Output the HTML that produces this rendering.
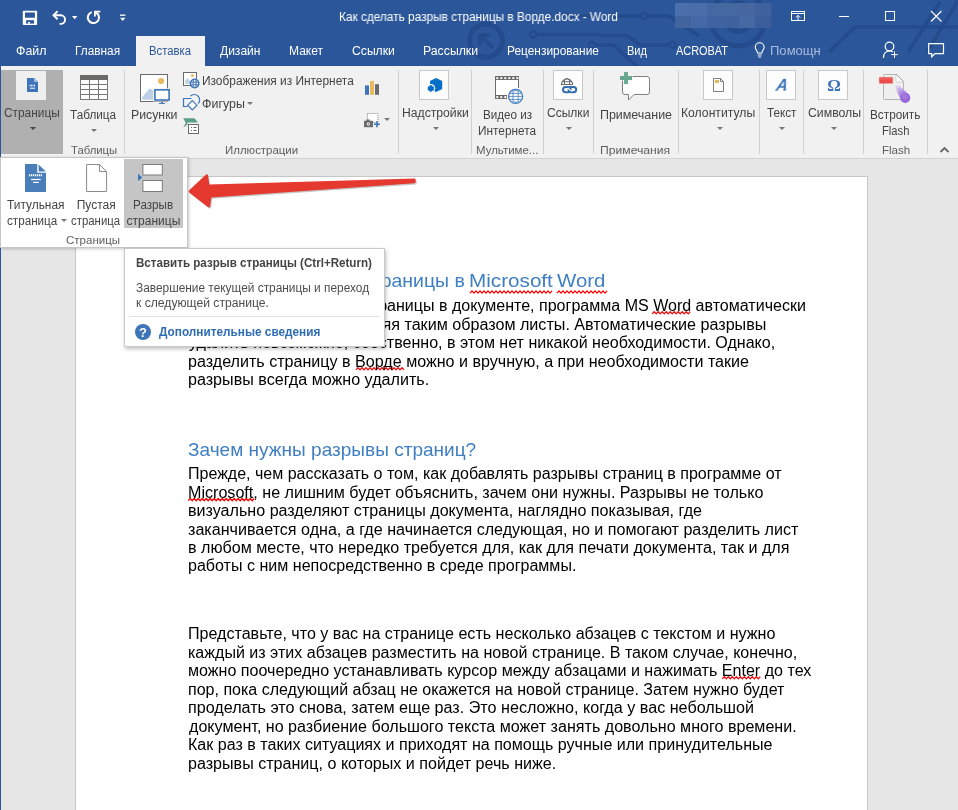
<!DOCTYPE html>
<html lang="ru">
<head>
<meta charset="utf-8">
<title>Как сделать разрыв страницы в Ворде.docx - Word</title>
<style>
*{box-sizing:border-box;margin:0;padding:0}
html,body{width:958px;height:810px;overflow:hidden;background:#e6e6e6}
body{font-family:"Liberation Sans",sans-serif;font-size:12px;color:#444}
#app{position:relative;width:958px;height:810px;overflow:hidden;background:#e6e6e6}
.abs{position:absolute}
/* title */
#title{position:absolute;left:0;top:0;width:958px;height:66px;background:#2b579a;overflow:hidden}
#tabsel{position:absolute;left:136px;top:36px;width:69px;height:30px;background:#f1f1f1}
/* ribbon */
#ribbon{position:absolute;left:0;top:66px;width:958px;height:93px;background:#f1f1f1;border-bottom:1px solid #d2d2d2}
.sep{position:absolute;top:4px;width:1px;height:84px;background:#d0d0d0}
.dd{position:absolute;width:0;height:0;border-left:3px solid transparent;border-right:3px solid transparent;border-top:3px solid #777}
.ibox{position:absolute;width:30px;height:30px;background:#fdfdfd;border:1px solid #c8c8c8}
/* doc */
#doc{position:absolute;left:0;top:158px;width:958px;height:652px;background:#e6e6e6}
#page{position:absolute;left:75px;top:18px;width:793px;height:700px;background:#fff;border:1px solid #c6c6c6}
/* dropdown */
#dropdown{position:absolute;left:0px;top:157px;width:188px;height:91px;background:#fff;border:1px solid #c6c6c6;box-shadow:1px 1px 3px rgba(0,0,0,.22)}
#tooltip{position:absolute;left:124px;top:248px;width:261px;height:99px;background:#fff;border:1px solid #c8c8c8;box-shadow:1px 2px 4px rgba(0,0,0,.25)}
.tx{position:absolute;white-space:nowrap;line-height:20px;transform-origin:0 0}
</style>
</head>
<body>
<div id="app">

<!-- DOCUMENT -->
<div id="doc">
 <div id="page"></div>
</div>
<div id="doctext" style="will-change:transform">
 <svg class="abs" style="left:0;top:0" width="958" height="810" viewBox="0 0 958 810"><g fill="none" stroke="#f00" stroke-width="1.25">
  <path d="M470.0 293.1 L472.0 290.9 L474.0 293.1 L476.0 290.9 L478.0 293.1 L480.0 290.9 L482.0 293.1 L484.0 290.9 L486.0 293.1 L488.0 290.9 L490.0 293.1 L492.0 290.9 L494.0 293.1 L496.0 290.9 L498.0 293.1 L500.0 290.9 L502.0 293.1 L504.0 290.9 L506.0 293.1 L508.0 290.9 L510.0 293.1 L512.0 290.9 L514.0 293.1 L516.0 290.9 L518.0 293.1 L520.0 290.9 L522.0 293.1 L524.0 290.9 L526.0 293.1 L528.0 290.9 L530.0 293.1 L532.0 290.9 L534.0 293.1 L536.0 290.9 L538.0 293.1 L540.0 290.9 L542.0 293.1 L544.0 290.9 L546.0 293.1 L548.0 290.9 L550.0 293.1 L552.0 290.9"/>
  <path d="M557.0 293.1 L559.0 290.9 L561.0 293.1 L563.0 290.9 L565.0 293.1 L567.0 290.9 L569.0 293.1 L571.0 290.9 L573.0 293.1 L575.0 290.9 L577.0 293.1 L579.0 290.9 L581.0 293.1 L583.0 290.9 L585.0 293.1 L587.0 290.9 L589.0 293.1 L591.0 290.9 L593.0 293.1 L595.0 290.9 L597.0 293.1 L599.0 290.9 L601.0 293.1 L603.0 290.9 L605.0 293.1 L607.0 290.9"/>
  <path d="M652.2 313.8 L654.2 311.6 L656.2 313.8 L658.2 311.6 L660.2 313.8 L662.2 311.6 L664.2 313.8 L666.2 311.6 L668.2 313.8 L670.2 311.6 L672.2 313.8 L674.2 311.6 L676.2 313.8 L678.2 311.6 L680.2 313.8 L682.2 311.6 L684.2 313.8 L686.2 311.6 L688.2 313.8 L690.2 311.6"/>
  <path d="M356.0 369.8 L358.0 367.6 L360.0 369.8 L362.0 367.6 L364.0 369.8 L366.0 367.6 L368.0 369.8 L370.0 367.6 L372.0 369.8 L374.0 367.6 L376.0 369.8 L378.0 367.6 L380.0 369.8 L382.0 367.6 L384.0 369.8 L386.0 367.6 L388.0 369.8 L390.0 367.6 L392.0 369.8 L394.0 367.6 L396.0 369.8 L398.0 367.6 L400.0 369.8 L402.0 367.6 L404.0 369.8"/>
  <path d="M188.2 500.7 L190.2 498.5 L192.2 500.7 L194.2 498.5 L196.2 500.7 L198.2 498.5 L200.2 500.7 L202.2 498.5 L204.2 500.7 L206.2 498.5 L208.2 500.7 L210.2 498.5 L212.2 500.7 L214.2 498.5 L216.2 500.7 L218.2 498.5 L220.2 500.7 L222.2 498.5 L224.2 500.7 L226.2 498.5 L228.2 500.7 L230.2 498.5 L232.2 500.7 L234.2 498.5 L236.2 500.7 L238.2 498.5 L240.2 500.7 L242.2 498.5 L244.2 500.7 L246.2 498.5 L248.2 500.7 L250.2 498.5 L252.2 500.7 L254.2 498.5"/>
  <path d="M722.3 678.8 L724.3 676.6 L726.3 678.8 L728.3 676.6 L730.3 678.8 L732.3 676.6 L734.3 678.8 L736.3 676.6 L738.3 678.8 L740.3 676.6 L742.3 678.8 L744.3 676.6 L746.3 678.8 L748.3 676.6 L750.3 678.8 L752.3 676.6 L754.3 678.8 L756.3 676.6 L758.3 678.8 L760.3 676.6"/>
 </g></svg>
 <div class="tx" style="left:188.01px;top:271.00px;font-size:18.5px;color:#3f7fc1;transform:scaleX(0.9941);">Как сделать разрыв</div>
 <div class="tx" style="left:361.95px;top:271.00px;font-size:18.5px;color:#3f7fc1;transform:scaleX(1.0521);">страницы в</div>
 <div class="tx" style="left:469.08px;top:271.00px;font-size:18.5px;color:#3f7fc1;transform:scaleX(1.1176);">Microsoft</div>
 <div class="tx" style="left:557.40px;top:271.00px;font-size:18.5px;color:#3f7fc1;transform:scaleX(1.1023);">Word</div>
 <div class="tx" style="left:188.00px;top:296.00px;font-size:16px;color:#000;transform:scaleX(1.0020);">При достижении конца страницы в документе, программа MS Word автоматически</div>
 <div class="tx" style="left:187.99px;top:315.00px;font-size:16px;color:#000;transform:scaleX(1.0077);">вставляет разрыв, разделяя таким образом листы. Автоматические разрывы</div>
 <div class="tx" style="left:189.00px;top:333.00px;font-size:16px;color:#000;transform:scaleX(1.0026);">удалить невозможно, собственно, в этом нет никакой необходимости. Однако,</div>
 <div class="tx" style="left:187.99px;top:352.00px;font-size:16px;color:#000;transform:scaleX(1.0056);">разделить страницу в Ворде можно и вручную, а при необходимости такие</div>
 <div class="tx" style="left:187.99px;top:370.00px;font-size:16px;color:#000;transform:scaleX(1.0068);">разрывы всегда можно удалить.</div>
 <div class="tx" style="left:187.97px;top:440.00px;font-size:18.5px;color:#3f7fc1;transform:scaleX(1.0294);">Зачем нужны разрывы страниц?</div>
 <div class="tx" style="left:188.00px;top:464.00px;font-size:16px;color:#000;transform:scaleX(1.0007);">Прежде, чем рассказать о том, как добавлять разрывы страниц в программе от</div>
 <div class="tx" style="left:187.99px;top:483.00px;font-size:16px;color:#000;transform:scaleX(1.0061);">Microsoft, не лишним будет объяснить, зачем они нужны. Разрывы не только</div>
 <div class="tx" style="left:187.99px;top:501.00px;font-size:16px;color:#000;transform:scaleX(1.0057);">визуально разделяют страницы документа, наглядно показывая, где</div>
 <div class="tx" style="left:187.99px;top:520.00px;font-size:16px;color:#000;transform:scaleX(1.0054);">заканчивается одна, а где начинается следующая, но и помогают разделить лист</div>
 <div class="tx" style="left:187.99px;top:538.00px;font-size:16px;color:#000;transform:scaleX(1.0055);">в любом месте, что нередко требуется для, как для печати документа, так и для</div>
 <div class="tx" style="left:188.00px;top:556.00px;font-size:16px;color:#000;transform:scaleX(1.0031);">работы с ним непосредственно в среде программы.</div>
 <div class="tx" style="left:188.00px;top:624.00px;font-size:16px;color:#000;transform:scaleX(1.0046);">Представьте, что у вас на странице есть несколько абзацев с текстом и нужно</div>
 <div class="tx" style="left:188.00px;top:643.00px;font-size:16px;color:#000;transform:scaleX(1.0028);">каждый из этих абзацев разместить на новой странице. В таком случае, конечно,</div>
 <div class="tx" style="left:188.00px;top:661.00px;font-size:16px;color:#000;transform:scaleX(1.0048);">можно поочередно устанавливать курсор между абзацами и нажимать Enter до тех</div>
 <div class="tx" style="left:188.00px;top:680.00px;font-size:16px;color:#000;transform:scaleX(1.0013);">пор, пока следующий абзац не окажется на новой странице. Затем нужно будет</div>
 <div class="tx" style="left:187.99px;top:698.00px;font-size:16px;color:#000;transform:scaleX(1.0084);">проделать это снова, затем еще раз. Это несложно, когда у вас небольшой</div>
 <div class="tx" style="left:189.00px;top:717.00px;font-size:16px;color:#000;transform:scaleX(1.0053);">документ, но разбиение большого текста может занять довольно много времени.</div>
 <div class="tx" style="left:188.00px;top:735.00px;font-size:16px;color:#000;transform:scaleX(1.0038);">Как раз в таких ситуациях и приходят на помощь ручные или принудительные</div>
 <div class="tx" style="left:187.99px;top:754.00px;font-size:16px;color:#000;transform:scaleX(1.0052);">разрывы страниц, о которых и пойдет речь ниже.</div>

</div>

<!-- TITLE BAR -->
<div id="title">

 <svg class="abs" style="left:0;top:0" width="958" height="66" viewBox="0 0 958 66">
  <!-- circuit pattern -->
  <g fill="none" stroke="#23498a" stroke-width="3.500" opacity=".85">
   <circle cx="486" cy="40.700" r="16.500" stroke-width="5"/>
   <path d="M493 48 L481 36 M490 35 H480 V45" stroke-width="3.500"/>
   <circle cx="533" cy="34.500" r="3.200" stroke-width="2.200"/>
   <path d="M537 34.500 H600 M600 35.500 H627 L640 45 H669"/>
   <circle cx="672.600" cy="45" r="3.300" stroke-width="2.200"/>
   <circle cx="592" cy="45" r="3.200" stroke-width="2.200"/>
   <path d="M596 45 H613 L638 67"/>
   <path d="M560 16 H640 M648 16 H669 L699 36"/>
   <circle cx="644" cy="16" r="3.300" stroke-width="2.200"/>
   <circle cx="738" cy="19" r="27" stroke-width="5"/>
   <circle cx="738" cy="17" r="14.500" stroke-width="4.500"/>
   <path d="M829 52 L855 27 H958"/>
   <path d="M908 52 L940 2"/>
   <path d="M927 52 L958 1"/>
  </g>
  <!-- blurred account box -->
  <rect x="675.0" y="3" width="16.3" height="13" fill="#4a6fac"/>
  <rect x="691.0" y="3" width="16.3" height="13" fill="#4b6eaa"/>
  <rect x="707.0" y="3" width="16.3" height="13" fill="#4568a3"/>
  <rect x="723.0" y="3" width="16.3" height="13" fill="#4567a2"/>
  <rect x="739.0" y="3" width="16.3" height="13" fill="#46669f"/>
  <rect x="755.0" y="3" width="16.3" height="13" fill="#3f629e"/>
  <rect x="675.0" y="16" width="16.3" height="12" fill="#42659f"/>
  <rect x="691.0" y="16" width="16.3" height="12" fill="#4569a6"/>
  <rect x="707.0" y="16" width="16.3" height="12" fill="#3f63a0"/>
  <rect x="723.0" y="16" width="16.3" height="12" fill="#3f629e"/>
  <rect x="739.0" y="16" width="16.3" height="12" fill="#4668a3"/>
  <rect x="755.0" y="16" width="16.3" height="12" fill="#3c5f9b"/>
  <!-- QAT: save -->
  <rect x="22.800" y="10.800" width="14.300" height="14.300" rx=".8" fill="#fff"/>
  <rect x="25" y="12.500" width="9.900" height="5.200" fill="#2b579a"/>
  <rect x="26.100" y="20.200" width="7.900" height="3.400" fill="#2b579a"/>
  <rect x="28" y="22" width="2" height="1.600" fill="#fff"/>
  <!-- undo -->
  <g fill="none" stroke="#fff" stroke-width="1.900">
   <path d="M53.500 15.300 H60.800 A4.300 4.300 0 0 1 60.800 23.900 H59.500"/>
   <path d="M57.600 11.300 L53.500 15.300 L57.600 19.300"/>
  </g>
  <path d="M72 16 h5.400 l-2.700 3.200 z" fill="#fff"/>
  <!-- redo -->
  <path d="M91.800 12.100 A5.600 5.600 0 1 0 97.300 13.400" fill="none" stroke="#fff" stroke-width="2"/>
  <path d="M94 10.700 H100.300 V12.400 H97.200 L99 14.200 L97.700 15.500 L95.800 13.600 V16.600 H94 Z" fill="#fff"/>
  <!-- customize -->
  <rect x="120" y="14.500" width="5.400" height="1.300" fill="#fff"/>
  <path d="M120 17.700 h5.400 l-2.700 3.200 z" fill="#fff"/>
  <!-- window controls -->
  <g fill="none" stroke="#fff" stroke-width="1">
   <rect x="791.5" y="11.5" width="13" height="9"/>
   <path d="M791.5 13.5 H804.5" />
   <path d="M798 20 V15.5 M795.8 17.5 L798 15.3 L800.2 17.5"/>
   <path d="M839 16.5 H849"/>
   <rect x="885.5" y="11.5" width="9" height="9"/>
   <path d="M931 11 L941.5 21.5 M941.5 11 L931 21.5" stroke-width="1.1"/>
  </g>
  <!-- bulb -->
  <g fill="none" stroke="#fff" stroke-width="1.1">
   <path d="M757.5 53 C757.5 50.5 755.3 49.8 755.3 47.2 A4.4 4.4 0 0 1 764.1 47.2 C764.1 49.8 761.9 50.5 761.9 53 Z"/>
   <path d="M757.8 55 H761.6 M758.3 57 H761.1"/>
  </g>
  <!-- share -->
  <g fill="none" stroke="#fff" stroke-width="1.2">
   <circle cx="889.5" cy="46.5" r="4.3"/>
   <path d="M883.5 58 C883.5 53.5 886 51 889.5 51 C891 51 892 51.4 892.8 52"/>
   <path d="M894.500 51.300 V58 M891.200 54.600 H897.800" stroke-width="1"/>
  </g>
  <!-- comments -->
  <path d="M928.7 43.7 H943.5 V53.6 H935 L931.7 56.8 V53.6 H928.7 Z" fill="none" stroke="#fff" stroke-width="1.2"/>
 </svg>
 <div id="tabsel"></div>
</div>

<!-- RIBBON -->
<div id="ribbon">
 <div class="abs" style="left:1px;top:4px;width:62px;height:84px;background:#b0b0b0"></div>
 <div class="abs" style="left:16px;top:5px;width:30px;height:29px;background:#efefef"></div>
 <div class="dd" style="left:29.5px;top:61px;border-top-color:#444"></div>
 <div class="dd" style="left:90.5px;top:63px;border-top-color:#777"></div>
 <div class="sep" style="left:124px"></div>
 <div class="dd" style="left:247px;top:36px;border-top-color:#777"></div>
 <div class="dd" style="left:383.5px;top:52px;border-top-color:#777"></div>
 <div class="sep" style="left:398px"></div>
 <div class="ibox" style="left:419px;top:4px"></div>
 <div class="dd" style="left:432.5px;top:61px;border-top-color:#777"></div>
 <div class="sep" style="left:471px"></div>
 <div class="sep" style="left:543px"></div>
 <div class="ibox" style="left:553px;top:4px"></div>
 <div class="dd" style="left:565.5px;top:61px;border-top-color:#777"></div>
 <div class="sep" style="left:593px"></div>
 <div class="sep" style="left:678px"></div>
 <div class="ibox" style="left:703px;top:4px"></div>
 <div class="dd" style="left:716.5px;top:61px;border-top-color:#777"></div>
 <div class="sep" style="left:759px"></div>
 <div class="ibox" style="left:766px;top:4px"></div>
 <div class="dd" style="left:778.5px;top:61px;border-top-color:#777"></div>
 <div class="sep" style="left:803px"></div>
 <div class="ibox" style="left:818px;top:4px"></div>
 <div class="dd" style="left:830.5px;top:61px;border-top-color:#777"></div>
 <div class="sep" style="left:863px"></div>
 <div class="sep" style="left:927px"></div>
 <svg class="abs" style="left:0;top:0" width="958" height="92" viewBox="0 66 958 92">
  <!-- pages icon -->
  <path d="M27 78 H34 L38 82 V92 H27 Z" fill="#3e74b8"/>
  <path d="M34 78 V82 H38 Z" fill="#9dbbe0"/>
  <path d="M29.5 85.5 H35.5" stroke="#fff" stroke-width="1.4" stroke-dasharray="1 .5"/>
  <path d="M30 88.2 H35" stroke="#fff" stroke-width="1"/>
  <!-- table icon -->
  <rect x="80.5" y="75.5" width="27" height="24" fill="#fff" stroke="#7a7a7a"/>
  <rect x="80" y="75" width="28" height="5" fill="#6a6a6a"/>
  <path d="M89.5 80 V99 M98.5 80 V99 M81 84.5 H107 M81 89.5 H107 M81 94.5 H107" stroke="#7a7a7a" fill="none"/>
  <!-- pictures icon -->
  <rect x="140.5" y="74.5" width="27" height="27" fill="#fff" stroke="#6a6a6a"/>
  <circle cx="161.1" cy="80.9" r="3" fill="#eab85e"/>
  <path d="M142.3 99.8 V97 L149.8 88.2 L153.3 90.8 V99.8 Z" fill="#bdd0e8"/>
  <rect x="153.3" y="88.3" width="17.4" height="13.2" fill="#f1f1f1"/>
  <rect x="154.9" y="89.8" width="14.2" height="10.2" fill="#fff" stroke="#3e74b8" stroke-width="1.6"/>
  <path d="M159 103.4 H165 M161 102.6 H163" stroke="#3e74b8" stroke-width="1"/>
  <!-- online pictures -->
  <rect x="183.5" y="72.5" width="13" height="13" fill="#fff" stroke="#6a6a6a"/>
  <circle cx="192.4" cy="75.6" r="1.5" fill="#eab85e"/>
  <path d="M185.2 83.8 V80.5 L187.5 78.3 L189.8 80.5 V83.8 Z" fill="#bdd0e8"/>
  <circle cx="194.6" cy="83.5" r="4.200" fill="#f1f1f1" stroke="#3e74b8" stroke-width="1.500"/>
  <path d="M190.800 82.200 H198.400 M190.800 84.800 H198.400 M193.200 80 V87 M196 80 V87" stroke="#3e74b8" stroke-width="1" fill="none"/>
  <!-- shapes -->
  <path d="M191.500 98.500 H183.500 V106.500 H187.500" fill="none" stroke="#3e74b8" stroke-width="1.200"/>
  <path d="M190.300 96.200 A5.200 5.200 0 0 1 198.200 103.600" fill="none" stroke="#3e74b8" stroke-width="1.200"/>
  <path d="M192.300 100.600 L196.900 105.200 L192.300 109.800 L187.700 105.200 Z" fill="#fff" stroke="#3e74b8" stroke-width="1.200"/>
  <!-- smartart -->
  <path d="M183.2 118.2 H194.5 L198 122.5 H187.5 L187.5 124.5 L183.2 127.8 L185.8 123 Z" fill="#5b9e85"/>
  <rect x="188.5" y="124.5" width="10" height="9" fill="#fff" stroke="#6a6a6a"/>
  <path d="M191 127.5 H192 M193.5 127.5 H196.5 M191 130.5 H192 M193.5 130.5 H196.5" stroke="#6a6a6a" stroke-width="1"/>
  <!-- chart -->
  <rect x="365" y="85.4" width="4" height="9.4" fill="#3e74b8"/>
  <rect x="370" y="81" width="4" height="13.8" fill="#eab85e"/>
  <rect x="375" y="84.2" width="4" height="10.6" fill="#6a6a6a"/>
  <!-- screenshot -->
  <rect x="367.5" y="113.5" width="10.5" height="9" fill="#fff" stroke="#8a8a8a" stroke-dasharray="1 1"/>
  <rect x="364" y="120.8" width="9" height="6.4" fill="#6a6a6a"/>
  <rect x="366.3" y="119.5" width="3.4" height="2" fill="#6a6a6a"/>
  <circle cx="368.4" cy="124" r="1.7" fill="#f1f1f1"/>
  <circle cx="368.4" cy="124" r=".8" fill="#6a6a6a"/>
  <path d="M377 121.3 V127.3 M374 124.3 H380" stroke="#3e74b8" stroke-width="1.6"/>
  <!-- add-ins -->
  <path d="M436.100 78 L442.200 81.100 V88.900 L436.100 92 L430 88.900 V81.100 Z" fill="#0670c6"/>
  <circle cx="430.900" cy="88.400" r="4.300" fill="#fdfdfd"/>
  <path d="M430.900 85.300 L433.700 86.900 V90 L430.900 91.600 L428.100 90 V86.900 Z" fill="#0670c6" stroke="#0670c6" stroke-width=".6" stroke-linejoin="round"/>
  <!-- video -->
  <rect x="495" y="76" width="24" height="23" fill="#fff"/>
  <rect x="495" y="76" width="24" height="4" fill="#6a6a6a"/>
  <rect x="495" y="95" width="12" height="4" fill="#6a6a6a"/>
  <rect x="495" y="76" width="1" height="23" fill="#6a6a6a"/>
  <rect x="518" y="76" width="1" height="12" fill="#6a6a6a"/>
  <rect x="496.3" y="77.100" width="2" height="2" fill="#fff"/><rect x="500.3" y="77.100" width="2" height="2" fill="#fff"/><rect x="504.3" y="77.100" width="2" height="2" fill="#fff"/><rect x="508.3" y="77.100" width="2" height="2" fill="#fff"/><rect x="512.3" y="77.100" width="2" height="2" fill="#fff"/><rect x="516.3" y="77.100" width="2" height="2" fill="#fff"/>
  <rect x="496.3" y="96.100" width="2" height="2" fill="#fff"/><rect x="500.3" y="96.100" width="2" height="2" fill="#fff"/><rect x="504.3" y="96.100" width="2" height="2" fill="#fff"/>
  <circle cx="515.600" cy="96.400" r="8.200" fill="#f1f1f1"/>
  <circle cx="515.600" cy="96.400" r="7" fill="#fff" stroke="#3e78bd" stroke-width="1.300"/>
  <path d="M508.600 96.400 H522.600 M510 93.400 H521.200 M510 99.400 H521.200 M513 90.500 V102.300 M518.200 90.500 V102.300" stroke="#3e78bd" stroke-width=".8" fill="none"/>
  <path d="M515.600 89.600 L513.800 91.800 M515.600 89.600 L517.400 91.800 M515.600 103.200 L513.800 101 M515.600 103.200 L517.400 101" stroke="#3e78bd" stroke-width=".9" fill="none"/>
  <!-- links -->
  <path d="M561.400 84.500 A5.600 5.600 0 0 1 572.600 84.500 Z" fill="#fdfdfd" stroke="#6a6a6a" stroke-width="1.100"/>
  <path d="M564.500 79.500 V84.500 M569.500 79.500 V84.500 M562 81.700 H572" fill="none" stroke="#6a6a6a" stroke-width="1"/>
  <path d="M567 78 L565 80 M567 78 L569 80" fill="none" stroke="#6a6a6a" stroke-width=".8"/>
  <rect x="563" y="87" width="7.600" height="5.200" rx="2.600" fill="none" stroke="#2f6db0" stroke-width="2"/>
  <rect x="568.600" y="87" width="7.600" height="5.200" rx="2.600" fill="none" stroke="#2f6db0" stroke-width="2"/>
  <path d="M567.600 88 L571.600 91.200" stroke="#fdfdfd" stroke-width="1.200"/>
  <!-- comment -->
  <path d="M625 76.500 H647 Q649.500 76.500 649.500 79 V92 Q649.500 94.500 647 94.500 H634 L628.500 100 V94.500 H625 Q622.500 94.500 622.500 92 V79 Q622.500 76.500 625 76.500 Z" fill="#fff" stroke="#7f7f7f" stroke-width="1"/>
  <path d="M626 71.500 V84.500 M619.500 78 H632.500" stroke="#f1f1f1" stroke-width="5.400"/>
  <path d="M626 72 V84 M620 78 H632" stroke="#65a88f" stroke-width="3.800"/>
  <!-- header/footer -->
  <path d="M713.500 78.500 H720.500 L723.500 81.500 V91.500 H713.500 Z" fill="#fff" stroke="#808080" stroke-width="1"/>
  <path d="M720.500 78.500 V81.500 H723.500" fill="none" stroke="#808080" stroke-width="1"/>
  <rect x="715" y="80" width="4" height="3" fill="#eab85e"/>
  <!-- flash -->
  <path d="M884.500 74.500 H896.500 L903.500 81.500 V99.500 H884.500 Q883.500 99.500 883.500 98.500 V75.500 Q883.500 74.500 884.500 74.500 Z" fill="#efefef" stroke="#b4b4b4" stroke-width="1"/>
  <path d="M896 75 V80.500 Q896 82 897.500 82 H903" fill="#fff" stroke="#c4c4c4" stroke-width=".8"/>
  <path d="M896.500 74.500 L903.500 81.500" stroke="#8a8a8a" stroke-width="1" stroke-dasharray="1 .6"/>
  <rect x="879.200" y="77.200" width="13.600" height="6.400" rx=".5" fill="#ee4b4b"/>
  <rect x="879.600" y="77.600" width="12.800" height="2" fill="#f26a6a" opacity=".7"/>
  <circle cx="898.200" cy="88" r="2.800" fill="#d5c3ee" opacity=".7"/>
  <circle cx="900.200" cy="91" r="3.400" fill="#c1a6ea" opacity=".8"/>
  <circle cx="902.600" cy="94.300" r="4.200" fill="#ad88e2" opacity=".9"/>
  <circle cx="905.200" cy="97.800" r="5.100" fill="#9567d8"/>
  <circle cx="904.600" cy="96.400" r="3" fill="#a986e3" opacity=".6"/>
  <!-- collapse chevron -->
  <path d="M940.500 152 L944.500 148 L948.500 152" fill="none" stroke="#666" stroke-width="1.800"/>
 </svg>
 <div class="abs" style="left:767px;top:5px;width:30px;height:30px;text-align:center;font:italic bold 16px/30px 'Liberation Sans',sans-serif;color:#3e74b8;transform:skewX(-10deg);will-change:transform">A</div>
 <div class="abs" style="left:819px;top:5px;width:30px;height:30px;text-align:center;font:bold 17px/30px 'Liberation Serif',serif;color:#3e74b8;will-change:transform">Ω</div>
</div>

<div class="abs" style="left:0;top:0;width:958px;height:0;will-change:transform">
 <div class="tx" style="left:339.01px;top:7.00px;font-size:12px;color:#fff;transform:scaleX(0.9858);">Как сделать разрыв страницы в Ворде.docx - Word</div>
 <div class="tx" style="left:15.97px;top:41.00px;font-size:12px;color:#fff;transform:scaleX(1.0321);">Файл</div>
 <div class="tx" style="left:75.41px;top:41.00px;font-size:12px;color:#fff;transform:scaleX(0.9864);">Главная</div>
 <div class="tx" style="left:148.66px;top:41.00px;font-size:12px;color:#2b579a;transform:scaleX(0.9409);">Вставка</div>
 <div class="tx" style="left:219.50px;top:41.00px;font-size:12px;color:#fff;transform:scaleX(1.0025);">Дизайн</div>
 <div class="tx" style="left:288.70px;top:41.00px;font-size:12px;color:#fff;transform:scaleX(1.0030);">Макет</div>
 <div class="tx" style="left:352.40px;top:41.00px;font-size:12px;color:#fff;transform:scaleX(1.0143);">Ссылки</div>
 <div class="tx" style="left:423.48px;top:41.00px;font-size:12px;color:#fff;transform:scaleX(1.0231);">Рассылки</div>
 <div class="tx" style="left:506.71px;top:41.00px;font-size:12px;color:#fff;transform:scaleX(0.9923);">Рецензирование</div>
 <div class="tx" style="left:626.58px;top:41.00px;font-size:12px;color:#fff;transform:scaleX(0.9190);">Вид</div>
 <div class="tx" style="left:676.30px;top:41.00px;font-size:12px;color:#fff;transform:scaleX(0.9105);">ACROBAT</div>
 <div class="tx" style="left:770.41px;top:41.00px;font-size:12px;color:#a8badb;transform:scaleX(1.0867);">Помощн</div>
 <div class="tx" style="left:4.30px;top:103.00px;font-size:12px;color:#444;transform:scaleX(0.9893);">Страницы</div>
 <div class="tx" style="left:70.30px;top:105.00px;font-size:12px;color:#444;transform:scaleX(0.9809);">Таблица</div>
 <div class="tx" style="left:71.20px;top:140.00px;font-size:11px;color:#5e5e5e;transform:scaleX(1.0273);">Таблицы</div>
 <div class="tx" style="left:130.57px;top:105.00px;font-size:12px;color:#444;transform:scaleX(1.0250);">Рисунки</div>
 <div class="tx" style="left:201.71px;top:71.00px;font-size:12px;color:#444;transform:scaleX(0.9908);">Изображения из Интернета</div>
 <div class="tx" style="left:201.66px;top:94.00px;font-size:12px;color:#444;transform:scaleX(1.0375);">Фигуры</div>
 <div class="tx" style="left:224.76px;top:140.00px;font-size:11px;color:#5e5e5e;transform:scaleX(1.0391);">Иллюстрации</div>
 <div class="tx" style="left:401.59px;top:103.00px;font-size:12px;color:#444;transform:scaleX(1.0141);">Надстройки</div>
 <div class="tx" style="left:482.53px;top:105.00px;font-size:12px;color:#444;transform:scaleX(0.9694);">Видео из</div>
 <div class="tx" style="left:477.51px;top:121.00px;font-size:12px;color:#444;transform:scaleX(0.9862);">Интернета</div>
 <div class="tx" style="left:475.76px;top:140.00px;font-size:11px;color:#5e5e5e;transform:scaleX(1.0414);">Мультиме...</div>
 <div class="tx" style="left:547.30px;top:103.00px;font-size:12px;color:#444;transform:scaleX(1.0024);">Ссылки</div>
 <div class="tx" style="left:599.66px;top:105.00px;font-size:12px;color:#444;transform:scaleX(1.0368);">Примечание</div>
 <div class="tx" style="left:600.40px;top:140.00px;font-size:11px;color:#5e5e5e;transform:scaleX(1.1048);">Примечания</div>
 <div class="tx" style="left:681.38px;top:103.00px;font-size:12px;color:#444;transform:scaleX(1.0153);">Колонтитулы</div>
 <div class="tx" style="left:767.40px;top:103.00px;font-size:12px;color:#444;transform:scaleX(0.9733);">Текст</div>
 <div class="tx" style="left:807.50px;top:103.00px;font-size:12px;color:#444;transform:scaleX(1.0235);">Символы</div>
 <div class="tx" style="left:869.72px;top:105.00px;font-size:12px;color:#444;transform:scaleX(0.9820);">Встроить</div>
 <div class="tx" style="left:881.67px;top:121.00px;font-size:12px;color:#444;transform:scaleX(0.9321);">Flash</div>
 <div class="tx" style="left:881.56px;top:140.00px;font-size:11px;color:#5e5e5e;transform:scaleX(1.0440);">Flash</div>
</div>


<div class="abs" style="left:0;top:0;width:1px;height:810px;background:#2b579a"></div>
<!-- DROPDOWN -->
<div id="dropdown">
 <div class="abs" style="left:123px;top:1px;width:59px;height:69px;background:#c5c5c5"></div>
 <svg class="abs" style="left:-1px;top:-1px" width="190" height="92" viewBox="0 157 190 92">
  <!-- cover page -->
  <path d="M25 164 H37.200 V172.800 H46 V192 H25 Z" fill="#4a7ebb"/>
  <path d="M38.600 164.400 L45.800 171.500 H38.600 Z" fill="#4a7ebb"/>
  <path d="M29 175.300 H42" stroke="#fff" stroke-width="2" stroke-dasharray="1.300 .700"/>
  <path d="M31 179.500 H40.700" stroke="#fff" stroke-width="1.200"/>
  <path d="M33.200 182.400 H38.800" stroke="#fff" stroke-width="1.200"/>
  <!-- blank page -->
  <path d="M86.600 164.500 H99.500 L106.600 171.600 V191.500 H86.600 Z" fill="#fff" stroke="#8a8a8a" stroke-width="1"/>
  <path d="M99.500 164.500 V171.600 H106.600" fill="none" stroke="#8a8a8a" stroke-width="1"/>
  <!-- page break -->
  <rect x="142.900" y="164.500" width="19.400" height="10.500" fill="#fff" stroke="#7a7a7a" stroke-width="1"/>
  <rect x="142.900" y="180.500" width="19.400" height="11" fill="#fff" stroke="#7a7a7a" stroke-width="1"/>
  <path d="M138 173.800 L142.400 177.400 L138 181 Z" fill="#3e74b8"/>
 </svg>
 <div class="dd" style="left:59.500px;top:61px"></div>
</div>
<div id="tooltip">
 <div class="abs" style="left:4px;top:67px;width:250px;height:1px;background:#e1e1e1"></div>
 <svg class="abs" style="left:9px;top:74px" width="18" height="18" viewBox="0 0 18 18"><circle cx="9" cy="9" r="8" fill="#3e74b8"/><text x="9" y="13.600" text-anchor="middle" font-family="Liberation Sans, sans-serif" font-weight="bold" font-size="13" fill="#fff">?</text></svg>
</div>
<svg class="abs" style="left:180px;top:165px" width="250" height="50" viewBox="180 165 250 50">
 <path id="arw" d="M189.200 190.200 L205.800 174.800 Q207.600 173.400 208 175.400 L209.300 184.600 L414.400 178.600 Q416 179 415.800 181 Q415.600 183 414.600 183.300 L211.300 197.600 L210.200 206 Q209.600 208.300 207.800 207 L189.200 192.400 Q188 191.300 189.200 190.200 Z" fill="#a0a0a0" opacity=".6" transform="translate(1 1.200)"/>
 <path d="M189.200 190.200 L205.800 174.800 Q207.600 173.400 208 175.400 L209.300 184.600 L414.400 178.600 Q416 179 415.800 181 Q415.600 183 414.600 183.300 L211.300 197.600 L210.200 206 Q209.600 208.300 207.800 207 L189.200 192.400 Q188 191.300 189.200 190.200 Z" fill="#e5392f"/>
</svg>

<div class="abs" style="left:0;top:0;width:958px;height:0;will-change:transform">
 <div class="tx" style="left:7.30px;top:195.00px;font-size:12px;color:#444;transform:scaleX(0.9930);">Титульная</div>
 <div class="tx" style="left:6.50px;top:211.00px;font-size:12px;color:#444;transform:scaleX(0.9712);">страница</div>
 <div class="tx" style="left:76.70px;top:195.00px;font-size:12px;color:#444;">Пустая</div>
 <div class="tx" style="left:70.90px;top:211.00px;font-size:12px;color:#444;transform:scaleX(0.9500);">страница</div>
 <div class="tx" style="left:132.63px;top:195.00px;font-size:12px;color:#444;transform:scaleX(0.9700);">Разрыв</div>
 <div class="tx" style="left:126.60px;top:211.00px;font-size:12px;color:#444;">страницы</div>
 <div class="tx" style="left:66.40px;top:230.00px;font-size:11px;color:#5e5e5e;transform:scaleX(1.0471);">Страницы</div>
 <div class="tx" style="left:135.73px;top:253.00px;font-size:12px;color:#444;font-weight:bold;transform:scaleX(0.9663);">Вставить разрыв страницы (Ctrl+Return)</div>
 <div class="tx" style="left:135.71px;top:278.00px;font-size:12px;color:#4d4d4d;transform:scaleX(0.9894);">Завершение текущей страницы и переход</div>
 <div class="tx" style="left:135.69px;top:293.00px;font-size:12px;color:#4d4d4d;transform:scaleX(1.0116);">к следующей странице.</div>
 <div class="tx" style="left:158.70px;top:322.00px;font-size:12px;color:#2f6db5;font-weight:bold;transform:scaleX(0.9834);">Дополнительные сведения</div>
</div>

</div>
</body>
</html>
